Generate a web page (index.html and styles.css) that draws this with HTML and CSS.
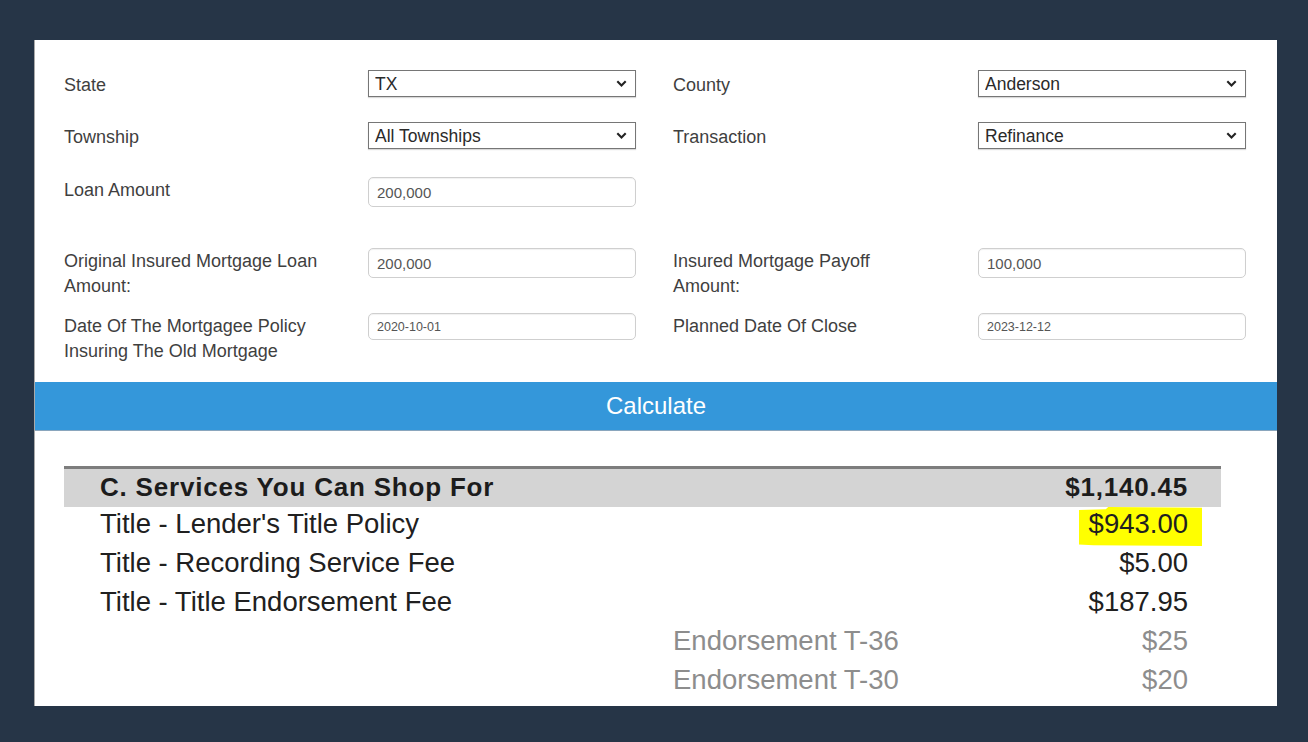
FILE: index.html
```html
<!doctype html>
<html>
  <head>
    <meta charset="utf-8">
    <title>Title Fee Calculator</title>
    <link rel="stylesheet" href="styles.css">
  </head>
  <body>
    <div class="panel">
      <form class="calc-form">
        <label class="field-label mid">State</label>
        <select class="field-select"><option>TX</option></select>
        <label class="field-label mid right">County</label>
        <select class="field-select"><option>Anderson</option></select>

        <label class="field-label mid">Township</label>
        <select class="field-select"><option>All Townships</option></select>
        <label class="field-label mid right">Transaction</label>
        <select class="field-select"><option>Refinance</option></select>

        <label class="field-label">Loan Amount</label>
        <input class="field-input" type="text" value="200,000">
        <div></div>
        <div></div>

        <label class="field-label">Original Insured Mortgage Loan Amount:</label>
        <input class="field-input" type="text" value="200,000">
        <label class="field-label right">Insured Mortgage Payoff Amount:</label>
        <input class="field-input" type="text" value="100,000">

        <label class="field-label">Date Of The Mortgagee Policy Insuring The Old Mortgage</label>
        <input class="field-input date" type="text" value="2020-10-01">
        <label class="field-label right">Planned Date Of Close</label>
        <input class="field-input date" type="text" value="2023-12-12">
      </form>

      <button class="calc-btn" type="button">Calculate</button>

      <table class="fees">
        <tr class="section">
          <td class="name">C. Services You Can Shop For</td>
          <td class="sub"></td>
          <td class="amount">$1,140.45</td>
        </tr>
        <tr>
          <td class="name">Title - Lender's Title Policy</td>
          <td class="sub"></td>
          <td class="amount"><span class="marker">$943.00</span></td>
        </tr>
        <tr>
          <td class="name">Title - Recording Service Fee</td>
          <td class="sub"></td>
          <td class="amount">$5.00</td>
        </tr>
        <tr>
          <td class="name">Title - Title Endorsement Fee</td>
          <td class="sub"></td>
          <td class="amount">$187.95</td>
        </tr>
        <tr class="detail">
          <td class="name"></td>
          <td class="sub">Endorsement T-36</td>
          <td class="amount">$25</td>
        </tr>
        <tr class="detail">
          <td class="name"></td>
          <td class="sub">Endorsement T-30</td>
          <td class="amount">$20</td>
        </tr>
      </table>
    </div>
  </body>
</html>
```

FILE: styles.css
```css
html, body {
  margin: 0;
  padding: 0;
}
body {
  background: #263547;
  padding: 40px 0 0 34px;
  font-family: "Liberation Sans", Arial, sans-serif;
}

.panel {
  width: 1243px;
  height: 666px;
  overflow: hidden;
  background: #fff;
  border-left: 1px solid #a9a9a9;
  box-sizing: border-box;
}

/* form grid: label | control | label | control */
.calc-form {
  display: grid;
  grid-template-columns: 304px 268px 342px 268px;
  grid-template-rows: 52px 54px 71px 65px 69px;
  align-items: start;
  padding: 31px 30px 0 29px;
}
.field-label {
  font-size: 18px;
  line-height: 25px;
  color: #3f3f3f;
  padding: 1px 48px 0 0;
}
.field-label.mid {
  padding-top: 2px;
}
.field-label.right {
  padding-left: 37px;
}
.field-select {
  appearance: none;
  -webkit-appearance: none;
  width: 268px;
  height: 27px;
  margin: -1px 0 0;
  padding: 0 24px 0 6px;
  border: 1px solid #767676;
  border-radius: 0;
  box-shadow: 0 1px 1px rgba(0, 0, 0, 0.15);
  background: #fff url("data:image/svg+xml,%3Csvg xmlns='http://www.w3.org/2000/svg' width='11' height='7' viewBox='0 0 11 7'%3E%3Cpath d='M1.3 1.3l4.2 4.2 4.2-4.2' fill='none' stroke='%23222' stroke-width='2.1'/%3E%3C/svg%3E") no-repeat right 8px center;
  font-family: "Liberation Sans", Arial, sans-serif;
  font-size: 17.5px;
  color: #2a2a2a;
}
.field-input {
  width: 268px;
  height: 30px;
  margin: 0;
  padding: 0 8px;
  box-sizing: border-box;
  border: 1px solid #cfcfcf;
  border-radius: 5px;
  box-shadow: inset 0 1px 1px rgba(0, 0, 0, 0.06);
  font-family: "Liberation Sans", Arial, sans-serif;
  font-size: 15px;
  color: #555;
}
.field-input.date {
  height: 27px;
  font-size: 12.5px;
}

.calc-btn {
  display: block;
  width: 100%;
  height: 49px;
  margin: 0;
  border: 0;
  border-bottom: 1px solid #8aa6bd;
  background: #3497da;
  color: #fff;
  font-family: "Liberation Sans", Arial, sans-serif;
  font-size: 24px;
  padding-bottom: 2px;
}

/* fee summary */
.fees {
  width: 1157px;
  margin: 35px 0 0 29px;
  border-collapse: collapse;
  font-size: 27.5px;
  color: #202020;
}
.fees td {
  padding: 0 0 6px;
  height: 33px;
  line-height: 33px;
  white-space: nowrap;
}
.fees .name {
  width: 573px;
  padding-left: 36px;
}
.fees .amount {
  width: 200px;
  text-align: right;
  padding-right: 33px;
}
.fees .section td {
  height: 36px;
  line-height: 36px;
  padding-bottom: 2px;
  background: #d4d4d4;
  border-top: 3px solid #7d7d7d;
  font-weight: bold;
  font-size: 26px;
  letter-spacing: 0.8px;
  color: #1c1c1c;
}
.fees .detail td {
  color: #8d8d8d;
}
.marker {
  display: inline-block;
  vertical-align: top;
  height: 39px;
  line-height: 33px;
  margin-bottom: -6px;
  background: #ffff00;
  padding: 0 14px 0 10px;
  margin-right: -14px;
  clip-path: polygon(0 8%, 22% 6%, 24% 0, 100% 2%, 100% 100%, 12% 98%, 0 96%);
}
```
